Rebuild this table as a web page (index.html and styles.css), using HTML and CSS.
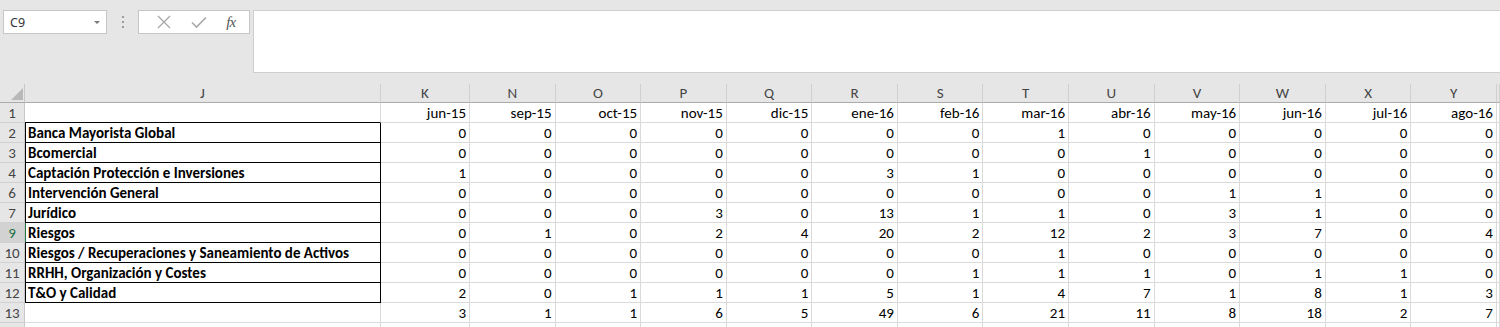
FILE: index.html
```html
<!DOCTYPE html>
<html lang="es">
<head>
    <meta charset="UTF-8">
    <title>Hoja1</title>
    <link rel="stylesheet" href="styles.css">
</head>
<body>
    <div class="toolbar">
        <div class="namebox">
            <span>C9</span>
            <span class="arrow"></span>
        </div>
        <div class="dots"><i></i><i></i><i></i></div>
        <div class="fxbox">
            <svg width="14" height="14" viewBox="0 0 14 14"><path d="M1 1 L13 13 M13 1 L1 13" stroke="#a8a8a8" stroke-width="1.3" fill="none"/></svg>
            <svg width="16" height="14" viewBox="0 0 16 14"><path d="M1 7.5 L5.5 12 L15 2.5" stroke="#a8a8a8" stroke-width="1.6" fill="none"/></svg>
            <span class="fx">fx</span>
        </div>
        <div class="formula"></div>
    </div>

    <div class="sheet" id="sheet"></div>

    <script>
        let cols = ["J", "K", "N", "O", "P", "Q", "R", "S", "T", "U", "V", "W", "X", "Y"];
        let months = ["jun-15", "sep-15", "oct-15", "nov-15", "dic-15", "ene-16", "feb-16", "mar-16", "abr-16", "may-16", "jun-16", "jul-16", "ago-16"];
        let rows = [
            [2, "Banca Mayorista Global", [0,0,0,0,0,0,0,1,0,0,0,0,0]],
            [3, "Bcomercial", [0,0,0,0,0,0,0,0,1,0,0,0,0]],
            [4, "Captación Protección e Inversiones", [1,0,0,0,0,3,1,0,0,0,0,0,0]],
            [6, "Intervención General", [0,0,0,0,0,0,0,0,0,1,1,0,0]],
            [7, "Jurídico", [0,0,0,3,0,13,1,1,0,3,1,0,0]],
            [9, "Riesgos", [0,1,0,2,4,20,2,12,2,3,7,0,4]],
            [10, "Riesgos / Recuperaciones y Saneamiento de Activos", [0,0,0,0,0,0,0,1,0,0,0,0,0]],
            [11, "RRHH, Organización y Costes", [0,0,0,0,0,0,1,1,1,0,1,1,0]],
            [12, "T&O y Calidad", [2,0,1,1,1,5,1,4,7,1,8,1,3]]
        ];
        let totals = [3,1,1,6,5,49,6,21,11,8,18,2,7];

        let sheet = document.getElementById("sheet");
        function cell(cls, text) {
            let d = document.createElement("div");
            d.className = cls;
            d.textContent = text === undefined ? "" : text;
            sheet.appendChild(d);
        }

        // column headers
        cell("corner");
        cols.forEach(c => cell("colhead", c));
        cell("colhead");

        // row 1: months
        cell("rowhead", 1);
        cell("cell name top");
        months.forEach(m => cell("cell num", m));
        cell("cell");

        rows.forEach(r => {
            let sel = r[0] === 9;
            cell("rowhead" + (sel ? " selected" : ""), r[0]);
            cell("cell name box" + (sel ? " active" : ""), r[1]);
            r[2].forEach(v => cell("cell num", v));
            cell("cell");
        });

        cell("rowhead", 13);
        cell("cell name");
        totals.forEach(v => cell("cell num", v));
        cell("cell");

        cell("rowhead", 14);
        for (let i = 0; i < 15; i++) cell("cell");
    </script>
</body>
</html>
```

FILE: styles.css
```css
* { margin: 0; padding: 0; box-sizing: border-box; }
body {
    background: #fff;
    overflow: hidden;
    font-family: Calibri, Carlito, Lato, sans-serif;
}

.toolbar {
    height: 84px;
    background: #e6e6e6;
    display: flex;
    align-items: flex-start;
    padding: 10px 0 0 3px;
}
.namebox {
    width: 104px;
    height: 24px;
    background: #fff;
    border: 1px solid #c6c6c6;
    display: flex;
    align-items: center;
    justify-content: space-between;
    padding: 0 6px 0 6px;
    font-family: "Noto Sans", "Open Sans", sans-serif;
    font-size: 12.5px;
    color: #333;
}
.arrow {
    width: 0;
    height: 0;
    border-left: 3px solid transparent;
    border-right: 3px solid transparent;
    border-top: 3px solid #7a7a7a;
}
.dots {
    width: 31px;
    height: 24px;
    display: flex;
    flex-direction: column;
    align-items: center;
    justify-content: center;
    gap: 3px;
}
.dots i {
    width: 2px;
    height: 2px;
    background: #9e9e9e;
}
.fxbox {
    width: 112px;
    height: 24px;
    background: #fff;
    border: 1px solid #c6c6c6;
    display: flex;
    align-items: center;
    justify-content: space-around;
    padding: 0 4px 0 8px;
}
.fx {
    font-family: "Liberation Serif", serif;
    font-style: italic;
    font-size: 15px;
    color: #555;
    letter-spacing: -1px;
}
.formula {
    flex: 1;
    height: 63px;
    margin-left: 3px;
    background: #fff;
    border: 1px solid #cfcfcf;
    border-right: none;
}

.sheet {
    display: grid;
    grid-template-columns: 25px 356px 89px repeat(12, 85.58px) 1fr;
    grid-template-rows: 19px repeat(12, 20px) 20px;
    font-size: 15px;
    color: #000;
}
.corner {
    background: #e6e6e6 url("data:image/svg+xml;utf8,<svg xmlns='http://www.w3.org/2000/svg' width='25' height='19'><polygon points='23,4 23,16 11,16' fill='%23b8b8b8'/></svg>") no-repeat;
    border-right: 1px solid #c8c8c8;
    border-bottom: 1px solid #ababab;
}
.colhead {
    background: #e6e6e6;
    border-right: 1px solid #d0d0d0;
    border-bottom: 1px solid #ababab;
    color: #444;
    text-align: center;
    line-height: 19px;
}
.rowhead {
    background: #e6e6e6;
    border-right: 1px solid #c8c8c8;
    border-bottom: 1px solid #d0d0d0;
    color: #444;
    text-align: center;
    line-height: 20px;
}
.rowhead.selected {
    background: #d2d2d2;
    color: #217346;
}
.cell {
    border-right: 1px solid #dadada;
    border-bottom: 1px solid #dadada;
    line-height: 20px;
    white-space: nowrap;
    overflow: hidden;
}
.num {
    text-align: right;
    padding-right: 3px;
}
.name {
    font-weight: bold;
    padding-left: 3px;
}
.top { border-bottom-color: #000; }
.box {
    border-left: 1px solid #000;
    border-right-color: #000;
    border-bottom-color: #000;
    padding-left: 2px;
}
.box.active { border-left-color: #217346; }
```
